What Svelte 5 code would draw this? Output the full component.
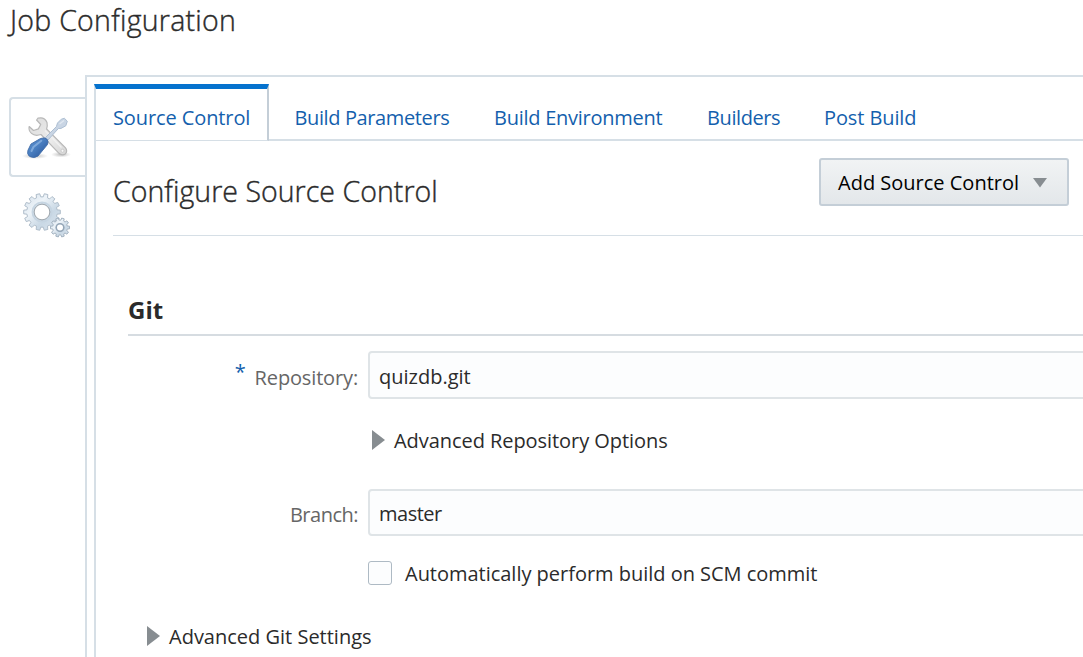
<script>
  const tabs = [
    { label: 'Source Control', kind: 'source' },
    { label: 'Build Parameters', kind: 'params' },
    { label: 'Build Environment', kind: 'env' },
    { label: 'Builders', kind: 'builders' },
    { label: 'Post Build', kind: 'post' }
  ];
  let active = $state('source');
  let repository = $state('quizdb.git');
  let branch = $state('master');
  let auto = $state(false);

  function gear(cx, cy, teeth, root, tip) {
    const pts = [];
    const step = (Math.PI * 2) / teeth;
    for (let i = 0; i < teeth; i++) {
      const a = i * step;
      for (const [o, r] of [[-0.32, root], [-0.22, tip], [0.22, tip], [0.32, root]]) {
        const t = a + o * step;
        pts.push(`${(cx + r * Math.cos(t)).toFixed(2)} ${(cy + r * Math.sin(t)).toFixed(2)}`);
      }
    }
    return `M${pts.join('L')}Z`;
  }
  const hole = (cx, cy, r) => `M${cx - r} ${cy}a${r} ${r} 0 1 0 ${2 * r} 0a${r} ${r} 0 1 0 ${-2 * r} 0Z`;
  const bigGear = gear(24, 26, 14, 15.2, 18.4) + hole(24, 26, 8);
  const smallGear = gear(42, 41.5, 10, 7.4, 9.6) + hole(42, 41.5, 3.6);
</script>

<main class="page">
  <h1><span>Job Configuration</span></h1>
  <div class="body">
    <nav class="side">
      <button class="side-tab selected" aria-label="Configure">
        <svg width="56" height="56" viewBox="0 0 56 56">
          <defs>
            <linearGradient id="handle" x1="0" y1="0" x2="1" y2="1">
              <stop offset="0" stop-color="#5f94d2" /><stop offset=".45" stop-color="#4a7fc1" /><stop offset="1" stop-color="#244f94" />
            </linearGradient>
            <linearGradient id="steel" x1="0" y1="0" x2="1" y2="1">
              <stop offset="0" stop-color="#dcdcdc" /><stop offset=".6" stop-color="#ebebeb" /><stop offset="1" stop-color="#d5d5d5" />
            </linearGradient>
            <radialGradient id="shade"><stop offset="0" stop-color="#888" stop-opacity=".55" /><stop offset="1" stop-color="#999" stop-opacity="0" /></radialGradient>
          </defs>
          <ellipse cx="17" cy="46" rx="13" ry="3" fill="url(#shade)" />
          <ellipse cx="43" cy="44.5" rx="10" ry="3" fill="url(#shade)" />
          <path d="M20 8.2Q26.500 6.500 29 12.500Q29.700 16 28.600 19L47.300 37.600Q50 41 47.300 43.900Q44 46 41 43.300L23 24.500Q17 26.500 13.500 23.400Q10.200 20.500 11.200 16.500L15.500 20.500L20.400 18.900L22.700 14.500L18.600 10Z" fill="url(#steel)" stroke="#b8b8b8" stroke-width="1.2" stroke-linejoin="round" />
          <path d="M27 20.500L43.500 37.500" stroke="#f1f1f1" stroke-width="1.300" />
          <circle cx="44.500" cy="40.800" r="1.500" fill="#f8f8f8" stroke="#c1c1c1" stroke-width=".7" />
          <path d="M43.300 9.200L46.400 8.300L49.300 11.200L47.800 15.800L43 18.400L40.400 18.500L29.500 30.500L27 28L38.400 16.600L39.500 13Z" fill="#c9d5e4" stroke="#adbfd3" stroke-width="1" />
          <path d="M41.500 14L46 10.500" stroke="#e0e8f1" stroke-width="1.500" />
          <path d="M22.500 28.500Q26.500 27 28.900 29.100Q30.800 31 29.500 34.500L20 46Q16 48.800 11.700 46.500Q8.500 44 10 40.200L13 34Z" fill="url(#handle)" stroke="#3f6ba7" stroke-width=".9" />
          <path d="M23.300 30.700L15.500 37L13.500 41" fill="none" stroke="#9fc2e9" stroke-width="2" stroke-linecap="round" opacity=".6" />
        </svg>
      </button>
      <button class="side-tab" aria-label="Settings">
        <svg width="56" height="56" viewBox="0 0 56 56">
          <defs>
            <linearGradient id="gear" x1="0" y1="0" x2="1" y2="1">
              <stop offset="0" stop-color="#d5e1ec" /><stop offset=".35" stop-color="#edf3f8" /><stop offset=".65" stop-color="#c9d8e5" /><stop offset="1" stop-color="#dce6ef" />
            </linearGradient>
          </defs>
          <path d={bigGear} fill="url(#gear)" fill-rule="evenodd" stroke="#afbdca" stroke-width="1" />
          <circle cx="24" cy="26" r="9.500" fill="none" stroke="#c6d5e2" stroke-width="2" />
          <circle cx="24" cy="26" r="7.800" fill="#fff" stroke="#a1a9b0" stroke-width="1" />
          <path d={smallGear} fill="url(#gear)" fill-rule="evenodd" stroke="#a4b3c1" stroke-width="1" />
          <circle cx="42" cy="41.500" r="3.800" fill="#fff" stroke="#94a6b7" stroke-width="1.600" />
        </svg>
      </button>
    </nav>

    <section class="outer">
      <div class="panel">
        <div class="tabs">
          {#each tabs as tab}
            <button class="tab {tab.kind}" class:active={active === tab.kind} onclick={() => (active = tab.kind)}><span>{tab.label}</span></button>
          {/each}
          <div class="rest"></div>
        </div>
        <div class="content">
          <header>
            <h2>Configure Source Control</h2>
            <button class="add"><span>Add Source Control</span>
              <svg width="14" height="10" viewBox="0 0 14 10"><path d="M0 0H14L7 9.500Z" fill="#878d91" /></svg>
            </button>
          </header>
          <div class="git">
            <h3>Git</h3>
            <div class="row repo">
              <label for="repo"><b>*</b><span class="repo-label">Repository:</span></label>
              <input id="repo" bind:value={repository} />
            </div>
            <div class="disclosure advanced">
              <svg width="13" height="20" viewBox="0 0 13 20"><path d="M0 0L13 10L0 20Z" fill="#878d91" /></svg>
              <span>Advanced Repository Options</span>
            </div>
            <div class="row branch">
              <label for="branch"><span>Branch:</span></label>
              <input id="branch" bind:value={branch} />
            </div>
            <label class="auto"><input type="checkbox" bind:checked={auto} /><span>Automatically perform build on SCM commit</span></label>
            <div class="disclosure settings">
              <svg width="13" height="20" viewBox="0 0 13 20"><path d="M0 0L13 10L0 20Z" fill="#878d91" /></svg>
              <span>Advanced Git Settings</span>
            </div>
          </div>
        </div>
      </div>
    </section>
  </div>
</main>

<style>
  :global(body) { background: #fff; overflow: hidden; }
  .page { box-sizing: border-box; width: 1083px; height: 657px; overflow: hidden; display: flex; flex-direction: column; font: 20px/30px "Open Sans", "Noto Sans", sans-serif; color: #2b2b2b; white-space: nowrap; }
  .page * { box-sizing: border-box; }
  button, input { font: inherit; letter-spacing: inherit; }
  button { background: none; border: 0; padding: 0; }
  svg { display: block; flex: none; }
  h1, h2, h3 { margin: 0; }
  h1 { height: 75px; padding: 1px 0 0 10px; font-size: 28.5px; line-height: 38px; font-weight: 300; letter-spacing: .26px; }
  h1, h2 { -webkit-text-stroke: .4px #2b2b2b; }
  .body { flex: 1; display: flex; min-height: 0; }
  .side { flex: none; width: 85px; padding: 22px 0 0 9px; }
  .side-tab { display: flex; align-items: flex-start; width: 76px; height: 80px; border: 2px solid transparent; border-right: 0; border-radius: 4px 0 0 4px; padding: 11px 0 0 7px; }
  .side-tab.selected { border-color: #d6dfe6; }
  .side-tab + .side-tab { padding-top: 7px; }
  .outer { flex: 1; border: solid #d6dfe6; border-width: 2px 0 0 2px; padding: 7px 0 0 7px; min-width: 0; }
  .panel { height: 600px; }
  .tabs { display: flex; height: 57px; }
  .tab { flex: none; height: 57px; padding: 12px 0 0; color: #145fad; text-align: left; border-bottom: 2px solid #d6dfe6; }
  .tab.active { border: solid #d6dfe6; border-width: 5px 2px 1px; border-top-color: #0572ce; border-right-color: #c4ced7; padding-top: 6px; }
  .tab.source { width: 175px; padding-left: 17px; letter-spacing: -.1px; }
  .tab.params { width: 203px; padding-left: 25.5px; letter-spacing: -.38px; }
  .tab.env { width: 212px; padding-left: 22px; letter-spacing: -.26px; }
  .tab.builders { width: 117px; padding-left: 23px; letter-spacing: -.4px; }
  .tab.post { width: 120px; padding-left: 23px; letter-spacing: -.1px; }
  .rest { flex: 1; border-bottom: 2px solid #d6dfe6; }
  .content { height: 543px; border-left: 2px solid #d6dfe6; padding-left: 17px; }
  header { height: 95px; border-bottom: 1px solid #d6dfe6; display: flex; justify-content: space-between; padding: 17px 14px 0 0; }
  h2 { font-size: 28.5px; line-height: 38px; font-weight: 300; padding-top: 14px; letter-spacing: .04px; }
  .add { width: 250px; height: 48px; border: 2px solid #c4ced7; border-radius: 3px; background: linear-gradient(#f1f3f4, #e3e7ea); color: #000; display: flex; align-items: center; justify-content: space-between; padding: 1px 20px 0 17px; }
  .git { padding-left: 15px; }
  h3 { height: 100px; padding-top: 59px; border-bottom: 2px solid #d6dce1; font-size: 24px; line-height: 30px; font-weight: 700; }
  .row { display: flex; }
  .row label { flex: none; width: 240px; display: flex; justify-content: flex-end; color: #666; padding: 12px 10px 0 0; letter-spacing: -.15px; }
  .row input { flex: none; width: 740px; border: 2px solid #dfe4e7; border-radius: 4px; background: #fcfdfe; color: #2b2b2b; padding: 0 9px; outline: 0; }
  .repo { height: 63px; padding-top: 15px; }
  .row.repo input { height: 48px; padding-top: 2px; }
  b { color: #145fad; font-weight: 400; margin: -6px 9px 0 0; }
  .disclosure { display: flex; align-items: center; gap: 9px; }
  .advanced { height: 30px; margin: 26px 0 0 244px; }
  .advanced span { padding-top: 1px; letter-spacing: -.06px; }
  .branch { height: 47px; margin-top: 34px; }
  .row.branch label { letter-spacing: -.5px; padding-top: 11px; }
  .row.branch input { height: 47px; letter-spacing: -.5px; padding-top: 2px; }
  .auto { display: flex; align-items: center; height: 24px; margin: 25px 0 0 240px; gap: 13px; letter-spacing: -.02px; }
  .auto span { padding-top: 2px; }
  .auto input { appearance: none; width: 24px; height: 24px; margin: 0; border: 1px solid #aebac4; border-radius: 3px; background: #fcfdfe; }
  .settings { height: 30px; margin: 36px 0 0 19px; }
  .settings span { padding-top: 1px; }
</style>
